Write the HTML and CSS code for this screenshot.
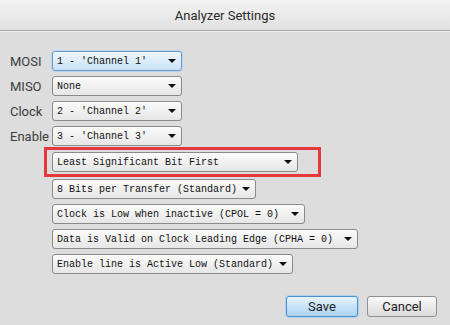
FILE: index.html
```html
<!DOCTYPE html>
<html lang="en">
<head>
<meta charset="UTF-8">
<title>Analyzer Settings</title>
<link rel="stylesheet" href="styles.css">
</head>
<body>
<div class="dialog">
    <div class="titlebar">Analyzer Settings</div>

    <div class="body">
        <div class="channels">
            <label class="label">MOSI</label>
            <div class="combo focused w-130"><span>1 - 'Channel 1'</span><i class="arrow"></i></div>
            <label class="label">MISO</label>
            <div class="combo w-130"><span>None</span><i class="arrow"></i></div>
            <label class="label">Clock</label>
            <div class="combo w-130"><span>2 - 'Channel 2'</span><i class="arrow"></i></div>
            <label class="label">Enable</label>
            <div class="combo w-130"><span>3 - 'Channel 3'</span><i class="arrow"></i></div>
        </div>

        <div class="options">
            <div class="highlight">
                <div class="combo w-246"><span>Least Significant Bit First</span><i class="arrow"></i></div>
            </div>
            <div class="combo w-204"><span>8 Bits per Transfer (Standard)</span><i class="arrow"></i></div>
            <div class="combo w-253"><span>Clock is Low when inactive (CPOL = 0)</span><i class="arrow"></i></div>
            <div class="combo w-306"><span>Data is Valid on Clock Leading Edge (CPHA = 0)</span><i class="arrow"></i></div>
            <div class="combo w-241"><span>Enable line is Active Low (Standard)</span><i class="arrow"></i></div>
        </div>

        <div class="buttons">
            <button class="btn default">Save</button>
            <button class="btn">Cancel</button>
        </div>
    </div>
</div>
</body>
</html>
```

FILE: styles.css
```css
body {
    margin: 0;
    background: #dcdcdc;
    font-family: 'Roboto', 'Liberation Sans', sans-serif;
    color: #333;
}
.dialog {
    width: 450px;
    height: 325px;
    background: #dddddd;
    overflow: hidden;
}
.titlebar {
    height: 30px;
    line-height: 31px;
    text-align: center;
    font-size: 13px;
    color: #2a2a2a;
    background: linear-gradient(#f3f3f3, #e1e1e1);
    border-bottom: 1px solid #a9a9a9;
    box-shadow: 0 1px 0 #efefef;
}
.body {
    padding: 20px 0 0 10px;
}
.channels {
    display: grid;
    grid-template-columns: 42px auto;
    row-gap: 5px;
    align-items: center;
}
.label {
    font-size: 13px;
    color: #3c3c3c;
}
.combo {
    box-sizing: border-box;
    height: 20px;
    display: flex;
    align-items: center;
    justify-content: space-between;
    padding: 0 5px 0 4px;
    border: 1px solid #8a8a8a;
    border-radius: 3px;
    background: linear-gradient(#fbfbfb, #e6e6e6);
    font-family: 'Liberation Mono', monospace;
    font-size: 10px;
    color: #111;
    white-space: pre;
}
.combo.focused {
    border-color: #6e99c4;
    background: linear-gradient(#eef6fc, #c9e2f5);
    box-shadow: 0 0 0 1px #b9d6ee;
}
.arrow {
    width: 0;
    height: 0;
    border-left: 4px solid transparent;
    border-right: 4px solid transparent;
    border-top: 4px solid #111;
}
.w-130 { width: 130px; }
.w-246 { width: 246px; }
.w-204 { width: 204px; }
.w-253 { width: 253px; }
.w-306 { width: 306px; }
.w-241 { width: 241px; }
.options {
    display: flex;
    flex-direction: column;
    align-items: flex-start;
    gap: 5px;
    margin-top: 1px;
    padding-left: 42px;
}
.highlight {
    box-sizing: border-box;
    width: 277px;
    margin-left: -8px;
    margin-bottom: -3px;
    padding: 2px 0 2px 5px;
    border: 3px solid #e5383b;
}
.buttons {
    display: flex;
    justify-content: flex-end;
    gap: 9px;
    margin-top: 22px;
    padding-right: 13px;
}
.btn {
    box-sizing: border-box;
    width: 70px;
    height: 21px;
    padding: 0;
    font-family: 'Roboto', 'Liberation Sans', sans-serif;
    font-size: 13px;
    color: #222;
    border: 1px solid #8f8f8f;
    border-radius: 3px;
    background: linear-gradient(#fafafa, #dadada);
}
.btn.default {
    width: 72px;
    border-color: #4f8fc9;
    background: linear-gradient(#e6f3fc, #a9d3f2);
    box-shadow: 0 0 0 1px #aed2ef;
}
```
